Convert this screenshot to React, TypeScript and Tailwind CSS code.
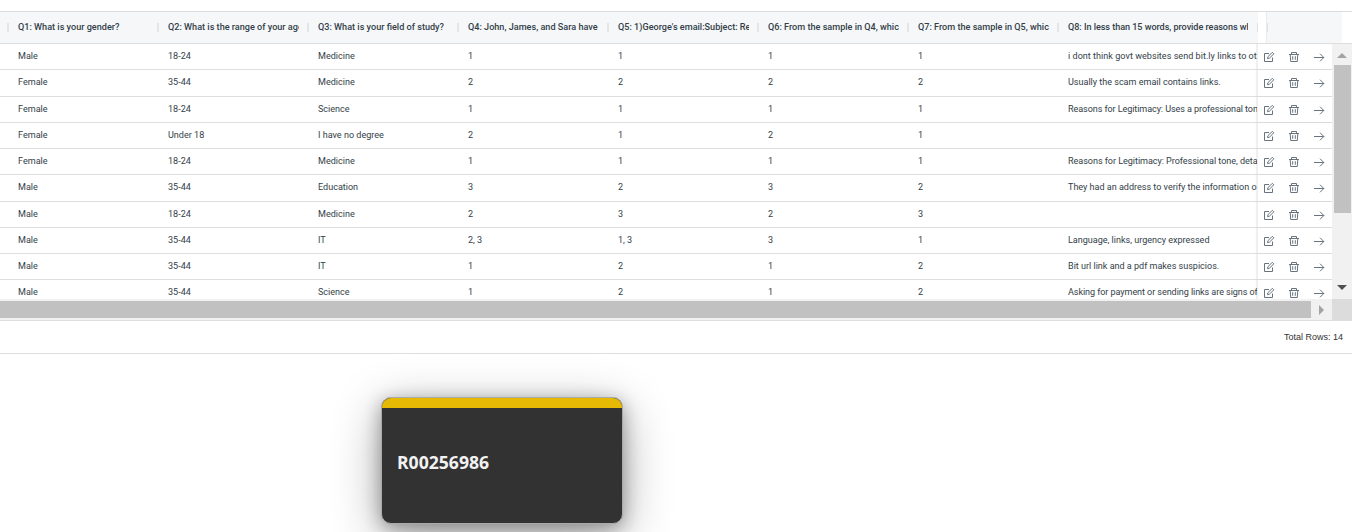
import React from "react";

type Row = { h: string; cells: string[]; note: string; track?: string };

const headers = [
  "Q1: What is your gender?",
  "Q2: What is the range of your age",
  "Q3: What is your field of study?",
  "Q4: John, James, and Sara have",
  "Q5: 1)George's email:Subject: Re",
  "Q6: From the sample in Q4, whic",
  "Q7: From the sample in Q5, whic",
];

const rows: Row[] = [
  { h: "h-[26px]", cells: ["Male", "18-24", "Medicine", "1", "1", "1", "1"], note: "i dont think govt websites send bit.ly links to ot", track: "tracking-[0.03px]" },
  { h: "h-[27px]", cells: ["Female", "35-44", "Medicine", "2", "2", "2", "2"], note: "Usually the scam email contains links." },
  { h: "h-[26px]", cells: ["Female", "18-24", "Science", "1", "1", "1", "1"], note: "Reasons for Legitimacy: Uses a professional ton", track: "tracking-[-0.08px]" },
  { h: "h-[26px]", cells: ["Female", "Under 18", "I have no degree", "2", "1", "2", "1"], note: "" },
  { h: "h-[26px]", cells: ["Female", "18-24", "Medicine", "1", "1", "1", "1"], note: "Reasons for Legitimacy: Professional tone, deta", track: "tracking-[-0.04px]" },
  { h: "h-[27px]", cells: ["Male", "35-44", "Education", "3", "2", "3", "2"], note: "They had an address to verify the information o" },
  { h: "h-[26px]", cells: ["Male", "18-24", "Medicine", "2", "3", "2", "3"], note: "" },
  { h: "h-[26px]", cells: ["Male", "35-44", "IT", "2, 3", "1, 3", "3", "1"], note: "Language, links, urgency expressed" },
  { h: "h-[26px]", cells: ["Male", "35-44", "IT", "1", "2", "1", "2"], note: "Bit url link and a pdf makes suspicios." },
  { h: "h-[26px]", cells: ["Male", "35-44", "Science", "1", "2", "1", "2"], note: "Asking for payment or sending links are signs of", track: "tracking-[-0.07px]" },
];

function EditIcon() {
  return (
    <svg width="12" height="12" viewBox="0 0 12 12" fill="none" stroke="#68737d" strokeWidth="1">
      <path d="M6 2.5H1.5v8h8V6.5" />
      <path d="M4.5 7.6l.4-1.9L9.3 1.3l1.5 1.5-4.4 4.4z" />
    </svg>
  );
}

function TrashIcon() {
  return (
    <svg width="12" height="12" viewBox="0 0 12 12" fill="none" stroke="#68737d" strokeWidth="1">
      <path d="M1 3.5h10M3.5 3.5v-2h5v2M2.2 3.5l.5 7h6.6l.5-7M4.7 5.2v3.6M7.3 5.2v3.6" />
    </svg>
  );
}

function ArrowIcon() {
  return (
    <svg width="12" height="12" viewBox="0 0 12 12" fill="none" stroke="#68737d" strokeWidth="1">
      <path d="M1 6.5h9.8M7 2.7l3.8 3.8L7 10.3" />
    </svg>
  );
}

function Divider() {
  return <div className="h-[9px] w-[2px] shrink-0 bg-[#e3e5e7]" />;
}

function HeaderRow() {
  return (
    <div className="flex h-[33px] border-y border-[#dedede] text-[9.1px] leading-[14px] font-medium text-[#333e48]">
      <div className="flex w-[1258px] shrink-0 items-center bg-[#f5f7f9] pl-[7px]">
        {headers.map((t) => (
          <div key={t} className="flex w-[150px] shrink-0 items-center">
            <Divider />
            <div className="ml-[9px] w-[131px] overflow-hidden pb-[2px] whitespace-nowrap">{t}</div>
          </div>
        ))}
        <Divider />
        <div className="ml-[9px] w-[180px] overflow-hidden pb-[2px] tracking-[-0.05px] whitespace-nowrap">Q8: In less than 15 words, provide reasons wh</div>
        <div className="ml-[9px] h-[9px] w-px bg-[#dfe1e3]" />
      </div>
      <div className="w-[8px] shrink-0" />
      <div className="flex w-[76px] items-center border-l border-[#e9ebed] bg-[#f5f7f9]">
        <div className="h-[9px] w-px bg-[#dfe1e3]" />
      </div>
    </div>
  );
}

function DataRow({ row }: { row: Row }) {
  return (
    <div className={`flex shrink-0 border-b border-[#dedede] ${row.h}`}>
      <div className="flex w-[1257px] shrink-0 items-start overflow-hidden pt-px pl-[18px] text-[9.05px] leading-[23px] text-[#333e48]">
        {row.cells.map((c, i) => (
          <div key={i} className="w-[150px] shrink-0 whitespace-nowrap">{c}</div>
        ))}
        <div className={`whitespace-nowrap ${row.track ?? "tracking-[-0.01px]"}`}>{row.note}</div>
      </div>
      <div className="flex w-[75px] items-start gap-[13px] border-l border-[#eceef0] pt-[7px] pl-[5px] shadow-[-1px_0_1px_rgba(0,0,0,0.06)]">
        <EditIcon />
        <TrashIcon />
        <ArrowIcon />
      </div>
    </div>
  );
}

export default function App() {
  return (
    <div className="h-[532px] w-[1352px] overflow-hidden bg-white pt-[11px] font-['Roboto',sans-serif]">
      <HeaderRow />
      <div className="flex h-[255px]">
        <div className="flex w-[1332px] flex-col overflow-hidden">
          {rows.map((r, i) => (
            <DataRow key={i} row={r} />
          ))}
        </div>
        <div className="flex w-5 flex-col items-center bg-[#f1f1f1]">
          <svg className="mt-[9px]" width="10" height="5"><path d="M0 5L5 0l5 5z" fill="#a3a3a3" /></svg>
          <div className="mt-[7px] h-[148px] w-[17px] bg-[#c1c1c1]" />
          <svg className="mt-[72px]" width="10" height="5"><path d="M0 0h10L5 5z" fill="#505050" /></svg>
        </div>
      </div>
      <div className="flex h-[21px]">
        <div className="flex w-[1332px] items-center bg-[#f1f1f1]">
          <div className="h-[17px] w-[1311px] bg-[#c1c1c1]" />
          <svg className="ml-[8px]" width="5" height="10"><path d="M0 0l5 5-5 5z" fill="#a3a3a3" /></svg>
        </div>
        <div className="w-5 bg-[#dcdcdc]" />
      </div>
      <div className="flex h-[34px] items-center justify-end border-y border-[#dedede] pt-[2px] pr-[9px] font-['Liberation_Sans',sans-serif] text-[9px] text-[#333333]">
        Total Rows: 14
      </div>
      <div className="mt-[43px] ml-[381px] h-[127px] w-[242px] overflow-hidden rounded-[10px] border border-[#aaaaaa] bg-[#323232] shadow-[0_12px_50px_rgba(0,0,0,0.32),0_4px_18px_rgba(0,0,0,0.32)]">
        <div className="h-[10px] bg-[#e6b905]" />
        <div className="flex h-[108px] items-center pl-[15px] font-['Open_Sans',sans-serif] text-[17.6px] font-bold text-[#f2f2f2]">R00256986</div>
      </div>
    </div>
  );
}
